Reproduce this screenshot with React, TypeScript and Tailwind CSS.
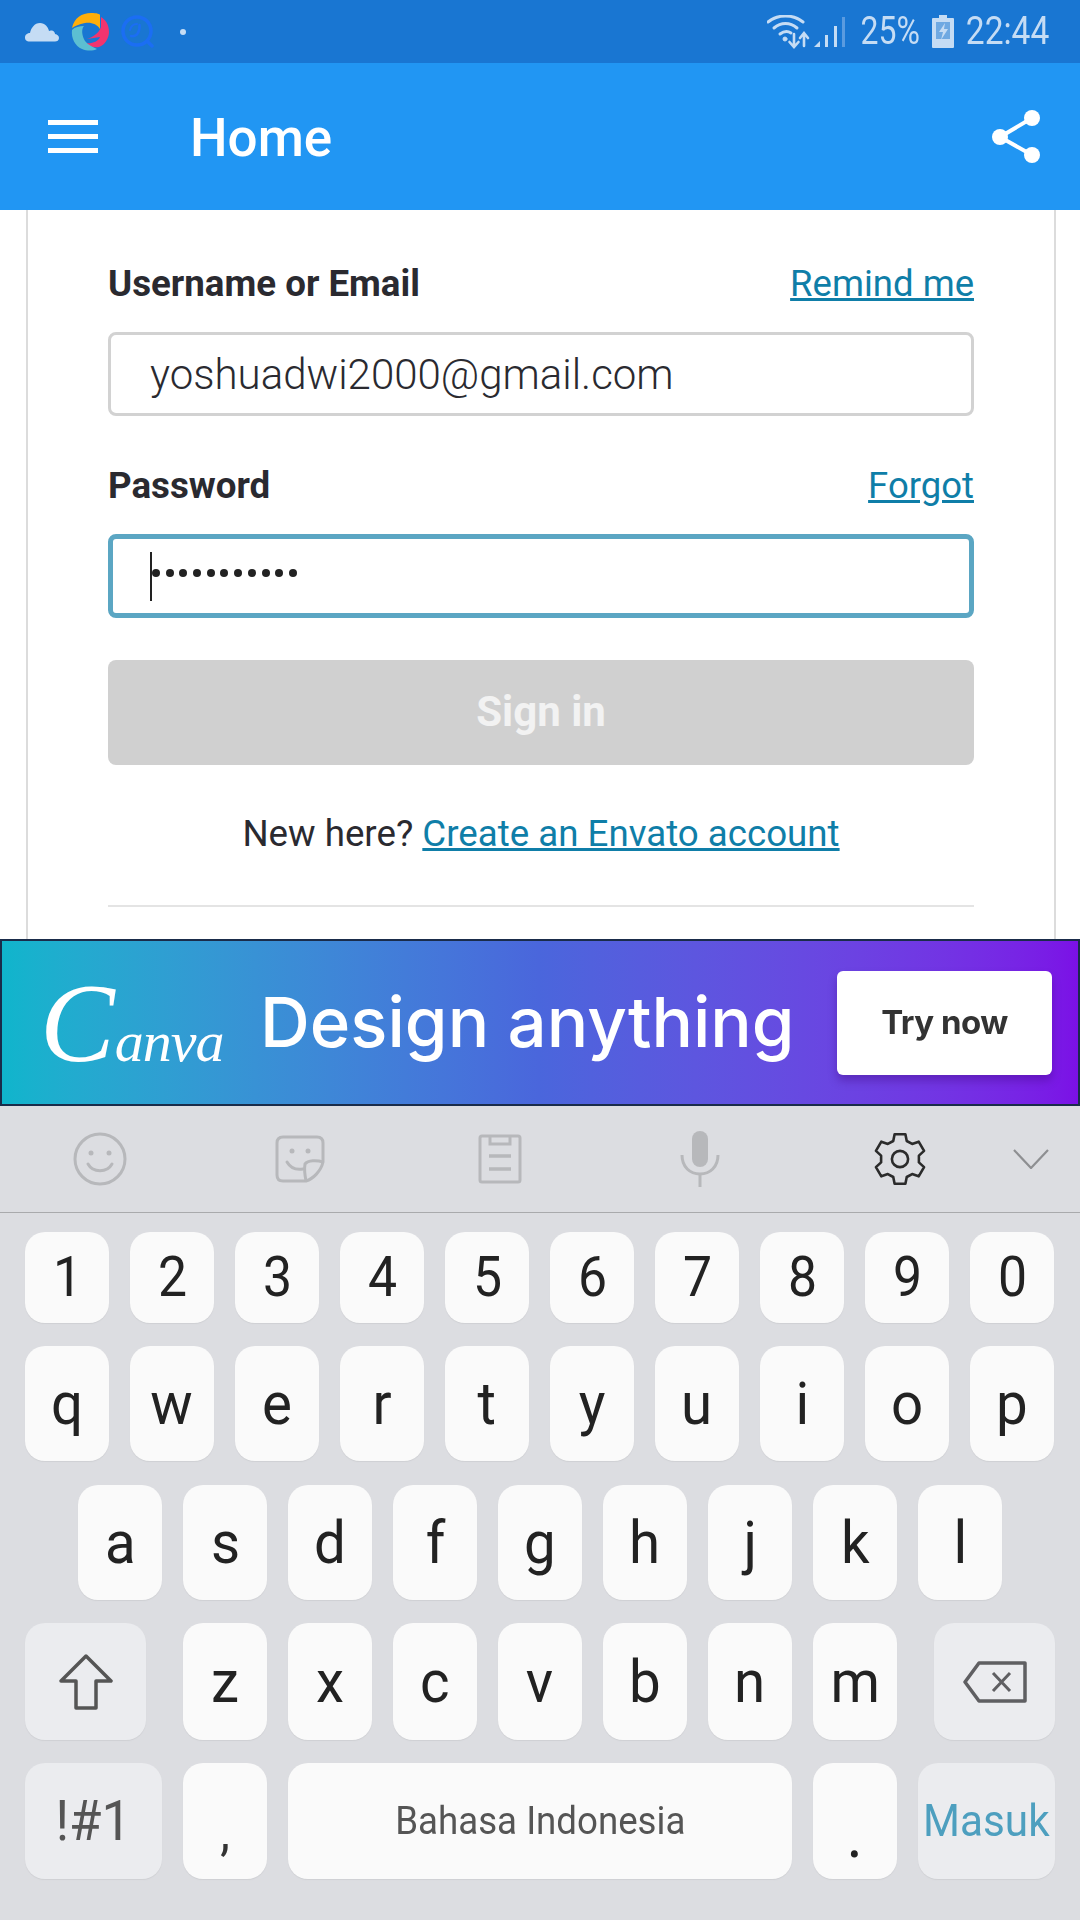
import React from "react";

const roboto = "font-['Roboto',sans-serif]";

function Key({ label, className = "w-[84px]", text = "text-[60px] text-[#222]", fn = false }: { label: React.ReactNode; className?: string; text?: string; fn?: boolean }) {
  return (
    <div className={`${className} h-full shrink-0 rounded-[20px] flex items-center justify-center shadow-[0_1px_1px_#cfd0d4] ${fn ? "bg-[#ebecef]" : "bg-[#fafafa]"} ${text}`}>
      {typeof label === "string" ? <span className="scale-x-[0.94] whitespace-nowrap">{label}</span> : label}
    </div>
  );
}

function StatusLeft() {
  return (
    <div className="flex items-center">
      <svg width="34" height="20" viewBox="0 0 34 20" className="ml-[25px]" fill="#c5dcf4">
        <path d="M5 19.5 C1 19.5 0 17.5 0 15.5 C0 12.5 2.5 11 5 11 C6 6 9.5 1 15 1 C20 1 23 5 24 9 C25 8.3 26 8.3 27 8.6 C29 9 30 11 30 12 C32.5 12.5 34 14 34 16 C34 18.5 32 19.5 30 19.5 Z" />
      </svg>
      <svg width="38" height="38" viewBox="0 0 38 38" className="ml-[12px]">
        <path d="M1 15 C3 5 11 0 20 0 C26 0 29 1 29 2 L29 16 C26 11 20 9 14 10 C8 11 4 13 1 15 Z" fill="#ffae0a" />
        <path d="M30 4 C35 7 38 12 38 19 C38 25 34 32 28 34 C24 35 18 34 15 30 C20 31 27 29 29 24 L16 26 C22 24 28 20 30 14 Z" fill="#f2346f" />
        <path d="M1 17 C4 14 8 13 13 13 C10 16 11 23 14 28 C17 32 22 34 26 36 C22 38 16 38 11 36 C4 33 0 25 1 17 Z" fill="#5cbfd2" />
      </svg>
      <svg width="33" height="33" viewBox="0 0 33 33" className="ml-[12px]" fill="none" stroke="#1b6ef3">
        <circle cx="16" cy="16" r="14" strokeWidth="3.5" />
        <path d="M27 27 L31 31" strokeWidth="3.5" strokeLinecap="round" />
        <path d="M10 21 C16 22 19 17 18.5 10" strokeWidth="2.5" strokeLinecap="round" />
        <path d="M9 15 C10 11 13 9 16 9" strokeWidth="2" strokeLinecap="round" />
      </svg>
      <div className="ml-[26px] w-[6px] h-[6px] rounded-full bg-[#c5dcf4]" />
    </div>
  );
}

function StatusRight() {
  return (
    <div className="flex items-center text-[#c5dcf4] mr-[30px]">
      <svg width="44" height="34" viewBox="0 0 44 34" fill="none" stroke="#c5dcf4" strokeLinecap="round">
        <path d="M1 7 C11 -1 26 -1 36 7" strokeWidth="3" />
        <path d="M7 13 C14 7 23 7 30 13" strokeWidth="3" />
        <path d="M13 19 C17 16 21 16 24 18" strokeWidth="3" />
        <circle cx="18" cy="24" r="2" fill="#c5dcf4" strokeWidth="1" />
        <path d="M27 19 V31 M22.5 27 L27 32 L31.5 27" strokeWidth="2.6" />
        <path d="M37 31 V19 M33 23 L37 18 L41 23" strokeWidth="2.6" />
      </svg>
      <svg width="32" height="32" viewBox="0 0 32 32" className="ml-[3px]">
        <path d="M0 31 L6 25 V31 Z" fill="#c5dcf4" />
        <rect x="11" y="19" width="3" height="12" fill="#c5dcf4" />
        <rect x="20" y="10" width="3" height="21" fill="#c5dcf4" />
        <rect x="28" y="1" width="3" height="30" fill="#5a9be0" />
      </svg>
      <div className="w-[60px] ml-[14px] flex justify-center">
        <span className="text-[39px] leading-none scale-x-[0.82] whitespace-nowrap">25%</span>
      </div>
      <svg width="22" height="33" viewBox="0 0 22 33" className="ml-[12px]">
        <path d="M7 0 H15 V3 H21 Q22 3 22 4 V32 Q22 33 21 33 H1 Q0 33 0 32 V4 Q0 3 1 3 H7 Z" fill="#c5dcf4" />
        <rect x="4" y="7" width="14" height="17" fill="#6fa9e2" />
        <path d="M13 8 L7 17 H11 L9 25 L16 14 H12 Z" fill="#c5dcf4" />
      </svg>
      <div className="w-[84px] ml-[12px] flex justify-center">
        <span className="text-[39px] leading-none scale-x-[0.86] whitespace-nowrap">22:44</span>
      </div>
    </div>
  );
}

function AdBanner() {
  return (
    <div className="h-[167px] shrink-0 border-2 border-[#1a2c4a] flex items-center bg-gradient-to-r from-[#0fb5cc] via-[#4a66dc] to-[#7b10e6] font-['Inter',sans-serif] text-white">
      <span className="ml-[38px] w-[220px] leading-none italic font-['Liberation_Serif',serif] whitespace-nowrap blur-[0.6px]">
        <span className="text-[112px]">C</span>
        <span className="text-[58px] tracking-[-1px]">anva</span>
      </span>
      <span className="w-[577px] text-[69px] leading-none font-medium whitespace-nowrap blur-[0.6px]">Design anything</span>
      <div className="w-[215px] h-[104px] rounded-[6px] bg-white shadow-[0_6px_8px_rgba(60,0,120,0.35)] flex items-center justify-center">
        <span className="text-[33px] font-bold text-[#333] blur-[0.6px] tracking-[-0.5px]">Try now</span>
      </div>
    </div>
  );
}

function Toolbar() {
  return (
    <div className="h-[107px] shrink-0 flex items-center border-b-[1px] border-[#a9aaac]">
      <div className="w-[200px] flex justify-center">
        <svg width="54" height="54" viewBox="0 0 54 54" fill="none" stroke="#b7b8bb" strokeWidth="3">
          <circle cx="27" cy="27" r="25" />
          <circle cx="18" cy="21" r="2.5" fill="#b7b8bb" stroke="none" />
          <circle cx="36" cy="21" r="2.5" fill="#b7b8bb" stroke="none" />
          <path d="M15 32 C20 41 34 41 39 32" strokeLinecap="round" />
        </svg>
      </div>
      <div className="w-[200px] flex justify-center">
        <svg width="50" height="48" viewBox="0 0 50 48" fill="none" stroke="#b7b8bb" strokeWidth="3">
          <path d="M31 46 H8 Q2 46 2 40 V8 Q2 2 8 2 H42 Q48 2 48 8 V27 C46 36 38 44 31 46 Z" />
          <path d="M48 27 C42 25 33 25 30 29 C29 35 30 41 31 46" />
          <circle cx="17" cy="16" r="2.5" fill="#b7b8bb" stroke="none" />
          <circle cx="33" cy="16" r="2.5" fill="#b7b8bb" stroke="none" />
          <path d="M12 27 C16 34 22 35 28 34" strokeLinecap="round" />
        </svg>
      </div>
      <div className="w-[200px] flex justify-center">
        <svg width="44" height="50" viewBox="0 0 44 50" fill="none" stroke="#b7b8bb" strokeWidth="3">
          <rect x="2" y="2" width="40" height="46" rx="2" />
          <path d="M12 2 V10 H32 V2" />
          <path d="M11 22 H33 M11 35 H33" strokeWidth="3.5" />
        </svg>
      </div>
      <div className="w-[200px] flex justify-center">
        <svg width="40" height="56" viewBox="0 0 40 56" fill="none" stroke="#b7b8bb" strokeWidth="3">
          <rect x="12" y="0" width="16" height="36" rx="8" fill="#b7b8bb" stroke="none" />
          <path d="M2 24 C2 36 10 43 20 43 C30 43 38 36 38 24" />
          <path d="M20 43 V56" />
        </svg>
      </div>
      <div className="w-[200px] flex justify-center">
        <svg width="54" height="56" viewBox="0 0 24 24" fill="none" stroke="#2b2b2b" strokeWidth="1.15" strokeLinejoin="round">
          <path d="M9.6 1 H14.4 L15 4 L17.4 5.3 L20.3 4.3 L22.7 8.4 L20.4 10.5 V13.5 L22.7 15.6 L20.3 19.7 L17.4 18.7 L15 20 L14.4 23 H9.6 L9 20 L6.6 18.7 L3.7 19.7 L1.3 15.6 L3.6 13.5 V10.5 L1.3 8.4 L3.7 4.3 L6.6 5.3 L9 4 Z" />
          <circle cx="12" cy="12" r="3.6" />
        </svg>
      </div>
      <svg width="36" height="20" viewBox="0 0 36 20" className="ml-[13px]" fill="none" stroke="#8e8f92" strokeWidth="2.2">
        <path d="M1 1 L18 19 L35 1" />
      </svg>
    </div>
  );
}

function Keyboard() {
  const nums = ["1", "2", "3", "4", "5", "6", "7", "8", "9", "0"];
  const top = ["q", "w", "e", "r", "t", "y", "u", "i", "o", "p"];
  const mid = ["a", "s", "d", "f", "g", "h", "j", "k", "l"];
  const bot = ["z", "x", "c", "v", "b", "n", "m"];
  return (
    <div className="flex-1 bg-[#dcdde1] px-[25px]">
      <div className="flex gap-[21px] h-[91px] mt-[19px]">
        {nums.map((n) => <Key key={n} label={n} text="text-[55px] text-[#222]" />)}
      </div>
      <div className="flex gap-[21px] h-[115px] mt-[23px]">
        {top.map((n) => <Key key={n} label={n} />)}
      </div>
      <div className="flex gap-[21px] h-[115px] mt-[24px] ml-[53px]">
        {mid.map((n) => <Key key={n} label={n} />)}
      </div>
      <div className="flex gap-[21px] h-[117px] mt-[23px]">
        <Key
          className="w-[121px] mr-[16px]"
          fn
          label={
            <svg width="54" height="56" viewBox="0 0 54 56" fill="none" stroke="#555" strokeWidth="3.5" strokeLinejoin="round">
              <path d="M27 2 L52 27 H37 V54 H17 V27 H2 Z" />
            </svg>
          }
        />
        {bot.map((n) => <Key key={n} label={n} />)}
        <Key
          className="w-[121px] ml-[16px]"
          fn
          label={
            <svg width="64" height="42" viewBox="0 0 64 42" fill="none" stroke="#5f5f62" strokeWidth="3.5" strokeLinejoin="round">
              <path d="M16 2 H62 V40 H16 L2 21 Z" />
              <path d="M30 12 L47 30 M47 12 L30 30" strokeWidth="3" />
            </svg>
          }
        />
      </div>
      <div className="flex gap-[21px] h-[116px] mt-[23px]">
        <Key className="w-[137px]" fn label="!#1" text="text-[56px] text-[#555]" />
        <Key label="," text="text-[52px] text-[#333] pt-[24px]" />
        <Key className="w-[504px]" label="Bahasa Indonesia" text="text-[39px] text-[#555]" />
        <Key label="." text="text-[66px] text-[#222] pt-[26px]" />
        <Key className="w-[137px]" fn label="Masuk" text="text-[45px] text-[#4d9fbf]" />
      </div>
    </div>
  );
}

export default function App() {
  return (
    <div className={`w-[1080px] h-[1920px] flex flex-col bg-white overflow-hidden ${roboto}`}>
      <div className="h-[63px] shrink-0 bg-[#1976d2] flex items-center justify-between">
        <StatusLeft />
        <StatusRight />
      </div>
      <div className="h-[147px] shrink-0 bg-[#2196f3] flex items-center text-white">
        <div className="ml-[48px] w-[50px] flex flex-col gap-[9px]">
          <div className="h-[5px] bg-white" />
          <div className="h-[5px] bg-white" />
          <div className="h-[5px] bg-white" />
        </div>
        <span className="ml-[92px] mt-[4px] text-[53px] font-medium leading-none">Home</span>
        <svg width="50" height="56" viewBox="0 0 50 56" className="ml-auto mr-[39px]" fill="#fff" stroke="#fff">
          <circle cx="41" cy="9" r="8" stroke="none" />
          <circle cx="9" cy="28" r="8" stroke="none" />
          <circle cx="41" cy="46" r="8" stroke="none" />
          <path d="M41 9 L9 28 L41 46" fill="none" strokeWidth="4" />
        </svg>
      </div>

      {/* Envato sign in form */}
      <div className="h-[729px] shrink-0 ml-[26px] mr-[24px] border-x-2 border-[#dcdcdc] pl-[80px] pr-[80px] pt-[51px] text-[#2a2a30]">
        <div className="flex items-center justify-between h-[46px]">
          <span className="text-[36.7px] font-bold">Username or Email</span>
          <span className="text-[36.5px] text-[#0f7ea8] underline">Remind me</span>
        </div>
        <div className="mt-[25px] h-[84px] rounded-[8px] border-[3px] border-[#d2d2d2] pl-[39px] flex items-center text-[42px] font-light">
          yoshuadwi2000@gmail.com
        </div>
        <div className="flex items-center justify-between h-[46px] mt-[47px]">
          <span className="text-[36.7px] font-bold">Password</span>
          <span className="text-[36.5px] text-[#0f7ea8] underline">Forgot</span>
        </div>
        <div className="mt-[25px] h-[84px] rounded-[8px] border-[5px] border-[#5ba6c3] pl-[37px] flex items-center">
          <div className="w-[2px] h-[49px] bg-[#222]" />
          <div className="flex gap-[5.7px] mb-[7px]">
            {Array.from({ length: 11 }).map((_, i) => (
              <div key={i} className="w-[8px] h-[8px] rounded-full bg-[#222]" />
            ))}
          </div>
        </div>
        <div className="mt-[42px] h-[105px] rounded-[8px] bg-[#d0d0d0] flex items-center justify-center text-[42px] font-bold text-[#f2f2f2] pb-[2px]">
          Sign in
        </div>
        <div className="mt-[46px] text-center text-[36.7px] leading-[46px]">
          New here? <span className="text-[#0f7ea8] underline">Create an Envato account</span>
        </div>
        <div className="mt-[48px] h-[2px] bg-[#e4e4e4]" />
      </div>

      <AdBanner />
      <div className="flex-1 flex flex-col bg-[#dcdde1]">
        <Toolbar />
        <Keyboard />
      </div>
    </div>
  );
}
